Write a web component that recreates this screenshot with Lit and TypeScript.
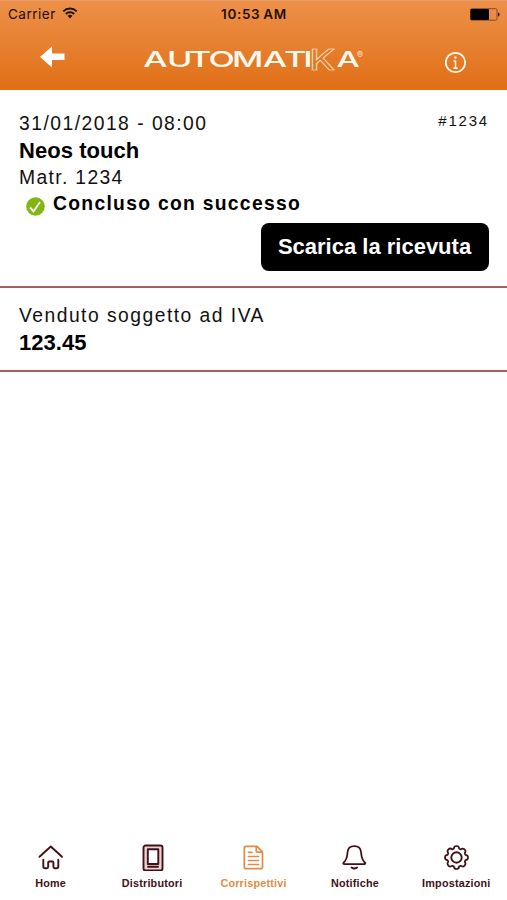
import { LitElement, html, css, svg } from "lit";
import { customElement } from "lit/decorators.js";
import { classMap } from "lit/directives/class-map.js";

const icons = {
  home: svg`<path d="M2.500 12.800 13.800 2.500l11.200 10.300M6.300 15.800v6.700q0 1.800 1.800 1.800h1.600q1.500 0 1.500-1.500v-4.300q0-1 1-1h3.200q1 0 1 1v4.300q0 1.500 1.500 1.500h1.600q1.800 0 1.800-1.800v-6.700"/>`,
  machine: svg`<rect x="4.500" y="1.500" width="19" height="25" rx="2" fill="#ecd2d2"/><rect x="8.800" y="5.200" width="10.500" height="14.800" fill="#fff"/><path d="M9 22.800h10"/>`,
  receipt: svg`<path d="M6 2.300h11l5.500 5.500V23q0 1.700-1.700 1.700H6q-1.700 0-1.700-1.700V4Q4.300 2.300 6 2.300zM16.200 2.500v4.200q0 1.500 1.500 1.500h4.500M8.500 8.300h3.500M8.500 12.500h10M8.500 16.500h10M8.500 20.500h10" stroke-width="1.700"/>`,
  bell: svg`<path d="M3.500 20.200q-1.700 0-1-1.500C6.200 15.500 6 13 6.500 8.500 6.800 4.700 9.500 2.200 13.300 2.200s6.500 2.500 6.800 6.300c.5 4.500.3 7 4 10.200q.7 1.500-1 1.500zM10.500 23.500q2.800 2 5.600 0" stroke-width="1.800"/>`,
  gear: svg`<path d="M10.800 4.700Q11 2 13.500 2t2.700 2.700l1.600.7q2-1.700 3.800 0t.1 3.800l.7 1.600Q25 11 25 13.500t-2.600 2.700l-.7 1.600q1.700 2-.1 3.800t-3.800.1l-1.600.7Q16 25 13.500 25t-2.700-2.600l-1.600-.7q-2 1.700-3.800-.1t-.1-3.800l-.7-1.600Q2 16 2 13.500t2.600-2.700l.7-1.600q-1.700-2 .1-3.800t3.800 0z" stroke-width="1.700"/><circle cx="13.500" cy="13.500" r="5.200"/>`,
};

const tabs = [
  { label: "Home", icon: icons.home },
  { label: "Distributori", icon: icons.machine },
  { label: "Corrispettivi", icon: icons.receipt, active: true },
  { label: "Notifiche", icon: icons.bell },
  { label: "Impostazioni", icon: icons.gear },
];

@customElement("app-header")
class AppHeader extends LitElement {
  static styles = css`
    :host {
      display: block;
      height: 90px;
      box-sizing: border-box;
      background: linear-gradient(#ed9049, #e06f16);
      border-top: 1px solid #e79b68;
      color: #1d0f06;
    }
    .status {
      display: grid;
      grid-template-columns: 1fr auto 1fr;
      align-items: center;
      height: 26px;
      padding: 0 7px 0 8px;
      font: 13.500px/26px Inter, sans-serif;
    }
    .carrier { display: flex; align-items: center; gap: 6px; letter-spacing: 0.500px; }
    .carrier svg { margin-top: -2px; }
    .time { font-weight: 600; letter-spacing: 0.650px; word-spacing: -1px; }
    .battery { justify-self: end; }
    svg { display: block; }
    .bar {
      display: grid;
      grid-template-columns: 144px 222px 1fr;
      height: 63px;
    }
    .back { margin: 19px 0 0 39px; }
    .logo { margin-top: 17px; overflow: visible; }
    .info { margin: 24px 0 0 78px; }
    .letters { font: 500 21.500px Inter, sans-serif; fill: #fffaf0; }
    .outlined { font: 500 28px Inter, sans-serif; fill: none; stroke: #ffe5cc; stroke-width: 0.700; }
    .reg { font: 9px Inter, sans-serif; fill: #ffe5cc; }
  `;
  render() {
    return html`
      <div class="status">
        <div class="carrier">Carrier
          <svg width="16" height="12" viewBox="0 0 15 12" fill="none" stroke="currentColor" stroke-width="1.900">
            <path d="M.8 4.300a9.500 9.500 0 0 1 13.400 0M3.300 7a6 6 0 0 1 8.400 0"/>
            <path d="M5 8.800a3.700 3.700 0 0 1 5 0L7.500 11.500z" fill="currentColor" stroke="none"/>
          </svg>
        </div>
        <div class="time">10:53 AM</div>
        <svg class="battery" width="30" height="13" viewBox="0 0 30 13">
          <rect x=".5" y=".7" width="26.500" height="11.500" rx="1.500" fill="none" stroke="#8a4b1c"/>
          <rect x=".5" y="1" width="18.500" height="11" rx="1" fill="#000"/>
          <path d="M28 4.500c2 .5 2 3.500 0 4z" fill="#2b1406"/>
        </svg>
      </div>
      <div class="bar">
        <svg class="back" width="27" height="22" viewBox="0 0 27 22" fill="#fff">
          <path d="M1 11 13 .5v7h12.500v6.500H13v7.500z"/>
        </svg>
        <svg class="logo" width="222" height="30" viewBox="0 0 222 30">
          <g transform="scale(1.600 1)">
            <text class="letters" y="23" x="-0.500 14.300 28 40.300 55 74.200 87.500 99.600">AUTOMATI</text>
            <text class="outlined" y="25.500" x="103.500" textLength="16" lengthAdjust="spacingAndGlyphs">K</text>
            <text class="letters" y="23" x="120.300" textLength="14.500" lengthAdjust="spacingAndGlyphs">A</text>
          </g>
          <text class="reg" x="213" y="14">®</text>
        </svg>
        <svg class="info" width="23" height="23" viewBox="0 0 23 23" fill="none" stroke="#fff8ea">
          <circle cx="11.500" cy="11.500" r="9.700" stroke-width="1.800"/>
          <path d="M11.500 9.500v8M9.500 10h2M9.300 17.200h4.400" stroke-width="1.500"/>
          <circle cx="11.300" cy="6.500" r="1.200" fill="#fff8ea" stroke="none"/>
        </svg>
      </div>
    `;
  }
}

@customElement("app-tabs")
class AppTabs extends LitElement {
  static styles = css`
    :host {
      display: grid;
      grid-template-columns: repeat(5, 1fr);
      height: 56px;
      color: #421118;
    }
    .tab {
      display: flex;
      flex-direction: column;
      align-items: center;
      font: bold 10.800px/14px "Liberation Sans", sans-serif;
      letter-spacing: 0.200px;
      gap: 5px;
    }
    .active { color: #e58a42; }
    svg { display: block; }
  `;
  render() {
    return tabs.map(
      (t) => html`<div class=${classMap({ tab: true, active: !!t.active })}>
        <svg width="27" height="27" viewBox="0 0 27 27" fill="none" stroke="currentColor" stroke-width="1.900" stroke-linejoin="round" stroke-linecap="round">${t.icon}</svg>
        <span>${t.label}</span>
      </div>`
    );
  }
}

@customElement("app-root")
class AppRoot extends LitElement {
  static styles = css`
    :host {
      display: flex;
      flex-direction: column;
      height: 900px;
      background: #fff;
      color: #111;
      font: 19.300px/26px "Liberation Sans", sans-serif;
    }
    main { flex: 1; }
    section {
      box-sizing: border-box;
      padding: 0 18px 0 19px;
      border-bottom: 2px solid #a4605f;
    }
    .summary { height: 198px; padding-top: 21px; }
    .sale { height: 84px; padding-top: 15px; }
    .row { display: flex; justify-content: space-between; }
    .line { letter-spacing: 1.480px; }
    .matr { letter-spacing: 1.350px; }
    .ref { font-size: 15px; line-height: 19px; letter-spacing: 1.800px; }
    .strong { font-weight: bold; font-size: 22px; line-height: 28px; letter-spacing: 0.050px; color: #000; }
    .sale .strong { line-height: 27px; }
    .state { display: flex; gap: 8px; height: 25px; line-height: 25px; padding-left: 7px; font-weight: bold; letter-spacing: 1.300px; color: #000; }
    .check { margin-top: 6px; }
    .download {
      display: block;
      box-sizing: border-box;
      width: 228px;
      height: 48px;
      margin: 6.500px 0.500px 0 auto;
      padding: 0;
      border: 0;
      border-radius: 8px;
      background: #000;
      color: #fff;
      font: bold 22px/48px "Liberation Sans", sans-serif;
    }
  `;
  render() {
    return html`
      <app-header></app-header>
      <main>
        <section class="summary">
          <div class="row">
            <span class="line">31/01/2018 - 08:00</span>
            <span class="ref">#1234</span>
          </div>
          <div class="strong">Neos touch</div>
          <div class="matr">Matr. 1234</div>
          <div class="state">
            <svg class="check" width="19" height="19" viewBox="0 0 19 19">
              <circle cx="9.500" cy="9.500" r="9.300" fill="#80b715"/>
              <path d="M4 10.500 7.500 14.500 14 5" fill="none" stroke="#f5fbe9" stroke-width="1.900"/>
            </svg>
            <span>Concluso con successo</span>
          </div>
          <button class="download">Scarica la ricevuta</button>
        </section>
        <section class="sale">
          <div class="line">Venduto soggetto ad IVA</div>
          <div class="strong">123.45</div>
        </section>
      </main>
      <app-tabs></app-tabs>
    `;
  }
}
